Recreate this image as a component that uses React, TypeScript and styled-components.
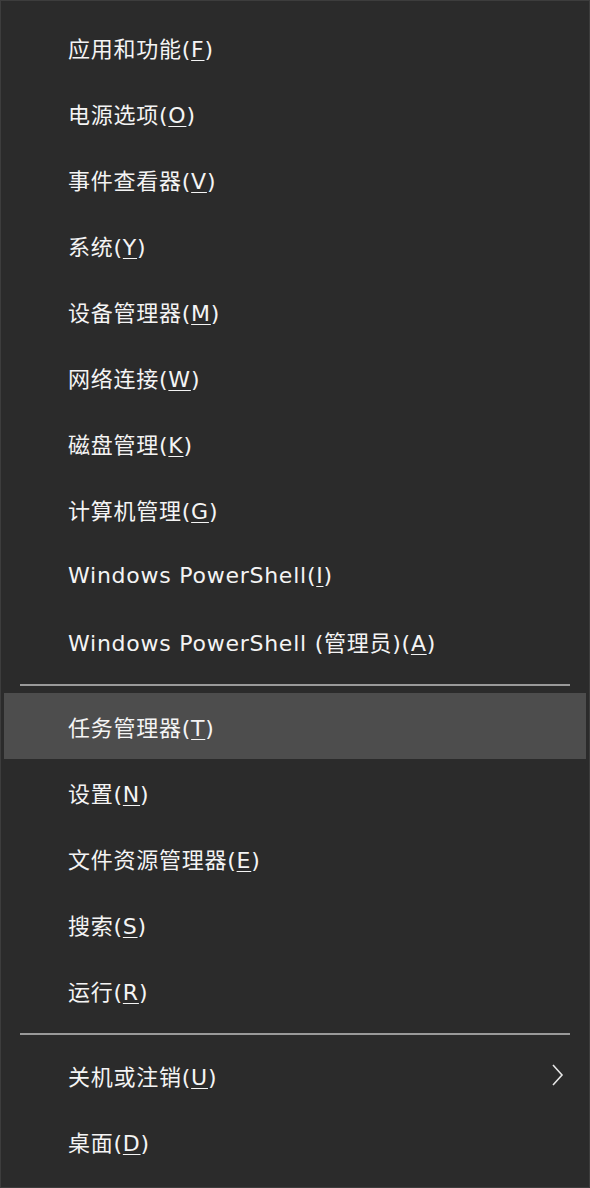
import React from 'react';
import styled, { createGlobalStyle } from 'styled-components';

const GlobalStyle = createGlobalStyle`
  html, body {
    margin: 0;
    padding: 0;
    background: #2b2b2b;
  }
  #root {
    height: 1188px;
  }
`;

const Menu = styled.div`
  box-sizing: border-box;
  width: 590px;
  height: 1188px;
  background: #2b2b2b;
  border: 1px solid #3d3d3d;
  padding: 13px 3px 0 3px;
  display: flex;
  flex-direction: column;
  font-family: 'DejaVu Sans', 'Noto Sans CJK SC', sans-serif;
  color: #f4f4f4;
`;

const Row = styled.div<{ $active?: boolean }>`
  height: 66px;
  flex-shrink: 0;
  display: flex;
  align-items: center;
  justify-content: space-between;
  padding: 0 22px 0 64px;
  background: ${(p) => (p.$active ? '#4d4d4d' : 'transparent')};
  font-size: 22px;
  white-space: nowrap;
`;

const Label = styled.span`
  letter-spacing: 0.75px;
`;

const Key = styled.span`
  text-decoration: underline;
  text-underline-offset: 3px;
  text-decoration-thickness: 1px;
`;

const Separator = styled.hr`
  flex-shrink: 0;
  border: none;
  height: 2px;
  background: #9a9a9a;
  margin: 10px 16px 7px 16px;
`;

const Chevron = () => (
  <svg width="14" height="24" viewBox="0 0 14 24" fill="none">
    <path d="M3 2 L12 12 L3 22" stroke="#e6e6e6" strokeWidth="1.6" />
  </svg>
);

type Item = { label: string; key: string; active?: boolean; sub?: boolean };

const groups: Item[][] = [
  [
    { label: '应用和功能', key: 'F' },
    { label: '电源选项', key: 'O' },
    { label: '事件查看器', key: 'V' },
    { label: '系统', key: 'Y' },
    { label: '设备管理器', key: 'M' },
    { label: '网络连接', key: 'W' },
    { label: '磁盘管理', key: 'K' },
    { label: '计算机管理', key: 'G' },
    { label: 'Windows PowerShell', key: 'I' },
    { label: 'Windows PowerShell (管理员)', key: 'A' },
  ],
  [
    { label: '任务管理器', key: 'T', active: true },
    { label: '设置', key: 'N' },
    { label: '文件资源管理器', key: 'E' },
    { label: '搜索', key: 'S' },
    { label: '运行', key: 'R' },
  ],
  [
    { label: '关机或注销', key: 'U', sub: true },
    { label: '桌面', key: 'D' },
  ],
];

const App: React.FC = () => (
  <>
    <GlobalStyle />
    <Menu>
      {groups.map((g, gi) => (
        <React.Fragment key={gi}>
          {gi > 0 && <Separator />}
          {g.map((item) => (
            <Row key={item.label} $active={item.active}>
              <Label>
                {item.label}(<Key>{item.key}</Key>)
              </Label>
              {item.sub && <Chevron />}
            </Row>
          ))}
        </React.Fragment>
      ))}
    </Menu>
  </>
);

export default App;
